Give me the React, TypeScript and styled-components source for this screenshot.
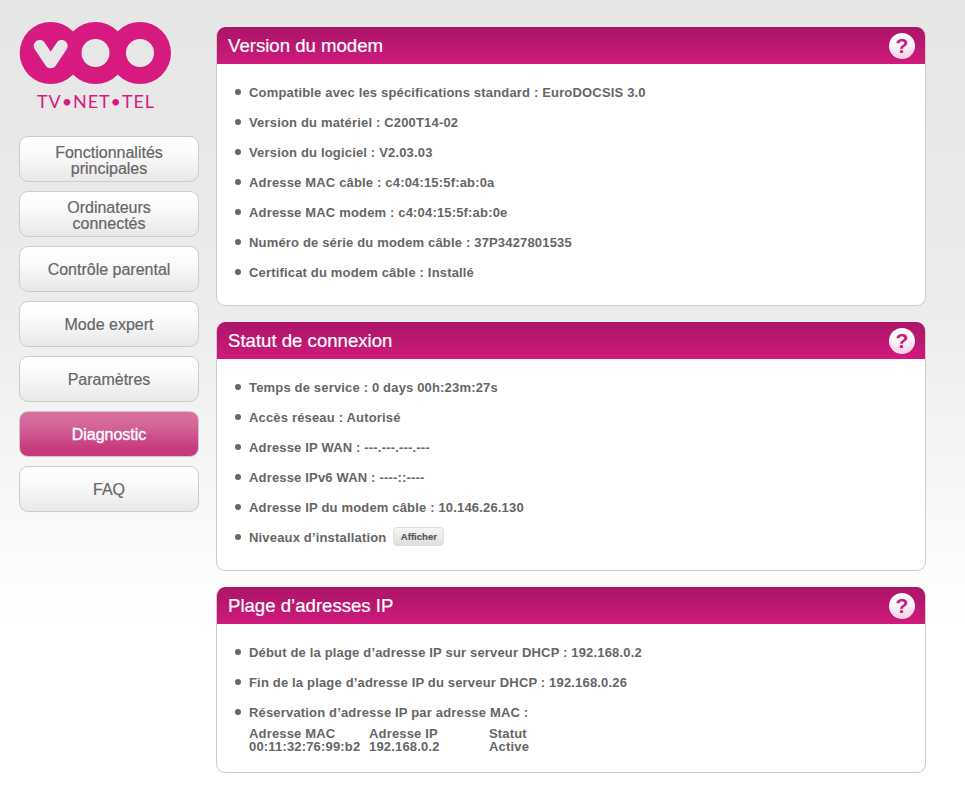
import React from "react";
import styled, { createGlobalStyle } from "styled-components";

const Global = createGlobalStyle`
  html, body { margin: 0; padding: 0; }
  html { background: #ffffff; }
  body {
    min-height: 804px;
    background: linear-gradient(180deg, #e6e6e6 0, #ececec 300px, #ffffff 620px);
    background-repeat: no-repeat;
    font-family: "Liberation Sans", Arial, sans-serif;
  }
`;

const Page = styled.div`
  display: flex;
  align-items: flex-start;
  gap: 17px;
  width: 965px;
  box-sizing: border-box;
  padding: 22px 0 0 19px;
`;

const Sidebar = styled.nav`
  display: flex;
  flex-direction: column;
  width: 180px;
  flex: none;
`;

const LogoBox = styled.svg`
  display: block;
  width: 160px;
  height: 90px;
  margin-bottom: 24px;
`;

const Menu = styled.div`
  display: flex;
  flex-direction: column;
  gap: 9px;
`;

const MenuButton = styled.div<{ $active?: boolean; $twoLines?: boolean }>`
  box-sizing: border-box;
  height: 46px;
  display: flex;
  align-items: center;
  justify-content: center;
  text-align: center;
  border: 1px solid ${(p) => (p.$active ? "#d3c3cb" : "#cccccc")};
  border-radius: 9px;
  font-size: 16px;
  line-height: 16px;
  padding: ${(p) => (p.$twoLines ? "4px" : "2px")} 20px 0;
  color: ${(p) => (p.$active ? "#ffffff" : "#666666")};
  -webkit-text-stroke: ${(p) => (p.$active ? "0.35px #ffffff" : "0.2px #666666")};
  background: ${(p) =>
    p.$active
      ? "linear-gradient(180deg, #d9709f 0%, #d4659a 30%, #c6397a 85%, #c6397a 100%)"
      : "linear-gradient(180deg, #ffffff 0%, #fbfbfb 35%, #e8e8e8 100%)"};
`;

const Content = styled.main`
  display: flex;
  flex-direction: column;
  gap: 16px;
  width: 710px;
  flex: none;
  margin-top: 5px;
`;

const Panel = styled.section`
  box-sizing: border-box;
  background: #ffffff;
  border: 1px solid #cccccc;
  border-top: 0;
  border-radius: 9px;
  overflow: hidden;
`;

const PanelHead = styled.header`
  height: 37px;
  display: flex;
  align-items: center;
  justify-content: space-between;
  padding: 0 11px 0 12px;
  background: linear-gradient(180deg, #aa1568 0%, #b8176f 40%, #d01a7c 100%);
  margin: 0 -1px;
`;

const PanelTitle = styled.h2`
  margin: 0;
  font-size: 18.6px;
  font-weight: 400;
  color: #ffffff;
  -webkit-text-stroke: 0.2px #ffffff;
`;

const Help = styled.div`
  width: 26px;
  height: 26px;
  border-radius: 50%;
  display: flex;
  align-items: center;
  justify-content: center;
  background: linear-gradient(180deg, #ffffff 0%, #fdf5fa 45%, #f7cde3 100%);
  color: #c91a79;
  font-size: 21px;
  font-weight: 700;
  line-height: 26px;
`;

const List = styled.ul<{ $bottom: number }>`
  list-style: none;
  margin: 0;
  padding: 13px 0 ${(p) => p.$bottom}px 18px;
`;

const Item = styled.li`
  display: flex;
  align-items: center;
  height: 30px;
  color: #666666;
  font-size: 13px;
  font-weight: 700;
  letter-spacing: 0.17px;
  white-space: pre;
  &::before {
    content: "";
    width: 6px;
    height: 6px;
    border-radius: 50%;
    background: #666666;
    margin-right: 8px;
    flex: none;
  }
`;

const MiniButton = styled.span`
  margin: 0 0 2px 7px;
  box-sizing: border-box;
  height: 19px;
  width: 51px;
  display: inline-flex;
  align-items: center;
  justify-content: center;
  border: 1px solid #dddddd;
  border-radius: 4px;
  font-size: 9.6px;
  letter-spacing: 0;
  color: #555555;
  -webkit-text-stroke: 0.15px #555555;
  background: linear-gradient(180deg, #f6f6f6 0%, #dedede 100%);
`;

const MacTable = styled.div`
  display: grid;
  grid-template-columns: 120px 120px 120px;
  margin: 0 0 0 14px;
  color: #666666;
  font-size: 13px;
  font-weight: 700;
  letter-spacing: 0.17px;
  line-height: 13px;
`;

const Cell = styled.div``;

function Logo() {
  return (
    <LogoBox viewBox="0 0 160 90" aria-label="VOO TV NET TEL">
      <g fill="#d71a7f">
        <circle cx="31.7" cy="31" r="31" />
        <circle cx="76.5" cy="31" r="31" />
        <circle cx="121" cy="31" r="31" />
      </g>
      <circle cx="76.5" cy="31" r="14" fill="#e7e7e7" />
      <circle cx="121" cy="31" r="14" fill="#e7e7e7" />
      <path d="M20.7 24 L31.7 40.3 L42.7 24" fill="none" stroke="#e7e7e7" strokeWidth="12" strokeLinecap="round" strokeLinejoin="round" />
      <text x="18" y="86" fill="#d71a7f" fontFamily="Lato, sans-serif" fontSize="18" textLength="117" lengthAdjust="spacing">
        TV•NET•TEL
      </text>
    </LogoBox>
  );
}

const menu = [
  { label: "Fonctionnalités principales", twoLines: true },
  { label: "Ordinateurs connectés", twoLines: true },
  { label: "Contrôle parental" },
  { label: "Mode expert" },
  { label: "Paramètres" },
  { label: "Diagnostic", active: true },
  { label: "FAQ" },
];

export default function App() {
  return (
    <>
      <Global />
      <Page>
        <Sidebar>
          <Logo />
          <Menu>
            {menu.map((m) => (
              <MenuButton key={m.label} $active={m.active} $twoLines={m.twoLines}>
                {m.label}
              </MenuButton>
            ))}
          </Menu>
        </Sidebar>
        <Content>
          <Panel>
            <PanelHead>
              <PanelTitle>Version du modem</PanelTitle>
              <Help>?</Help>
            </PanelHead>
            <List $bottom={18}>
              <Item>Compatible avec les spécifications standard : EuroDOCSIS 3.0</Item>
              <Item>Version du matériel : C200T14-02</Item>
              <Item>Version du logiciel : V2.03.03</Item>
              <Item>Adresse MAC câble : c4:04:15:5f:ab:0a</Item>
              <Item>Adresse MAC modem : c4:04:15:5f:ab:0e</Item>
              <Item>Numéro de série du modem câble : 37P3427801535</Item>
              <Item>Certificat du modem câble : Installé</Item>
            </List>
          </Panel>
          <Panel>
            <PanelHead>
              <PanelTitle>Statut de connexion</PanelTitle>
              <Help>?</Help>
            </PanelHead>
            <List $bottom={18}>
              <Item>Temps de service : 0 days 00h:23m:27s</Item>
              <Item>Accès réseau : Autorisé</Item>
              <Item>Adresse IP WAN : ---.---.---.---</Item>
              <Item>Adresse IPv6 WAN : ----::----</Item>
              <Item>Adresse IP du modem câble : 10.146.26.130</Item>
              <Item>
                Niveaux d’installation<MiniButton>Afficher</MiniButton>
              </Item>
            </List>
          </Panel>
          <Panel>
            <PanelHead>
              <PanelTitle>Plage d’adresses IP</PanelTitle>
              <Help>?</Help>
            </PanelHead>
            <List $bottom={19}>
              <Item>Début de la plage d’adresse IP sur serveur DHCP : 192.168.0.2</Item>
              <Item>Fin de la plage d’adresse IP du serveur DHCP : 192.168.0.26</Item>
              <Item>Réservation d’adresse IP par adresse MAC :</Item>
              <MacTable>
                <Cell>Adresse MAC</Cell>
                <Cell>Adresse IP</Cell>
                <Cell>Statut</Cell>
                <Cell>00:11:32:76:99:b2</Cell>
                <Cell>192.168.0.2</Cell>
                <Cell>Active</Cell>
              </MacTable>
            </List>
          </Panel>
        </Content>
      </Page>
    </>
  );
}
